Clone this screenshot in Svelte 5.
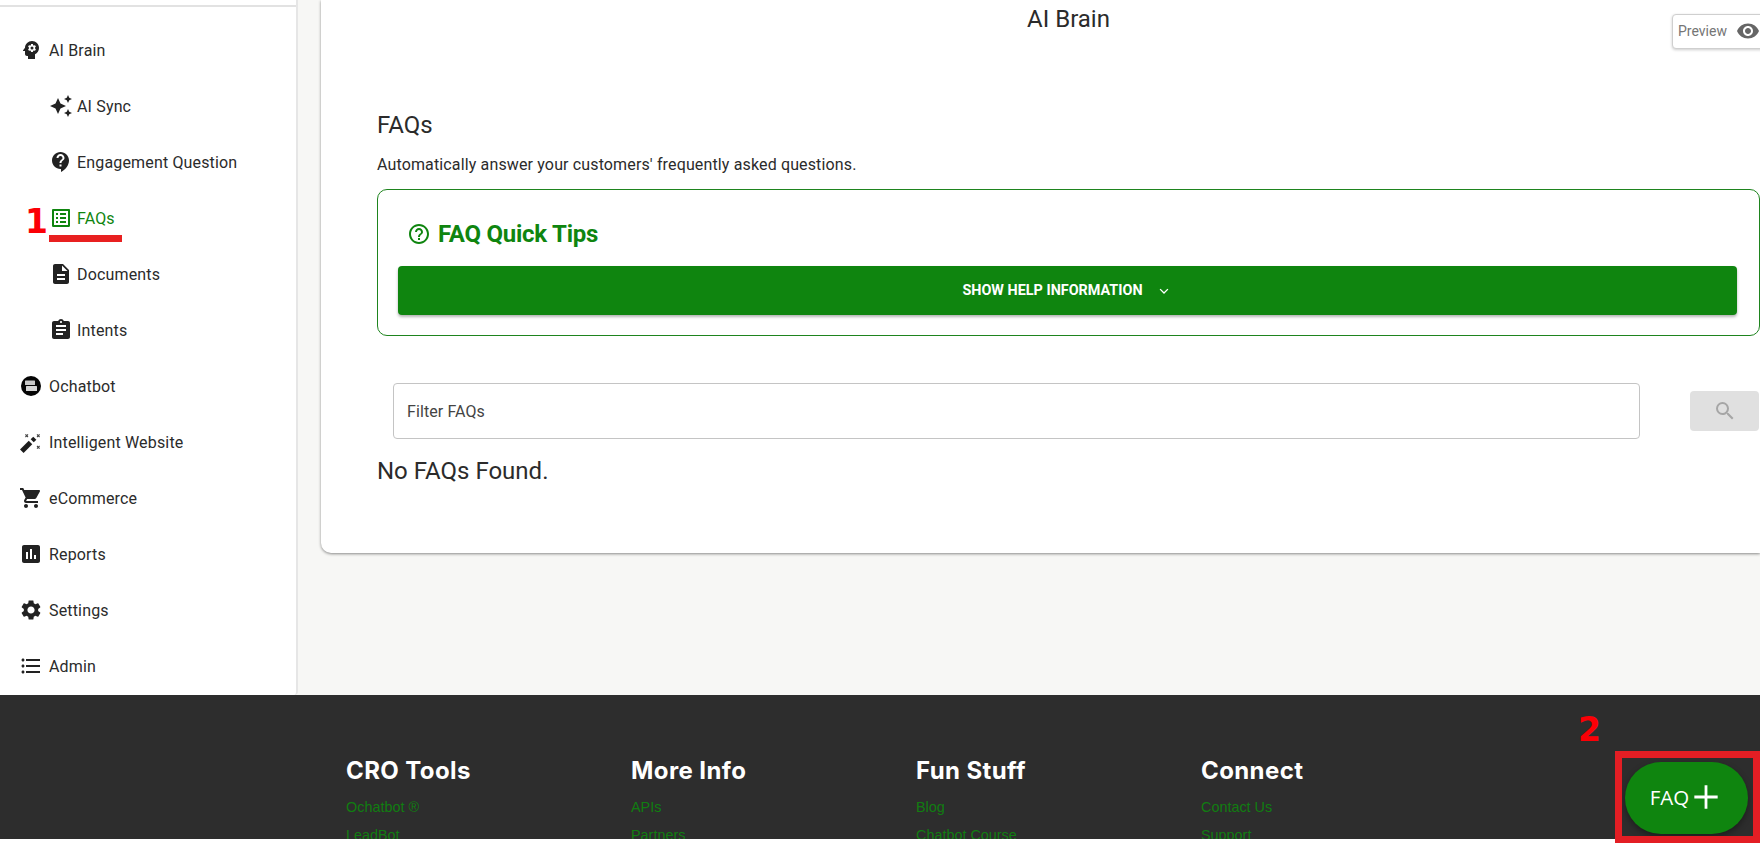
<script>
  const nav = [
    { label: 'AI Brain', icon: 'brain' },
    { label: 'AI Sync', icon: 'sparkle', sub: true },
    { label: 'Engagement Question', icon: 'question', sub: true },
    { label: 'FAQs', icon: 'list', sub: true, active: true },
    { label: 'Documents', icon: 'doc', sub: true },
    { label: 'Intents', icon: 'clipboard', sub: true },
    { label: 'Ochatbot', icon: 'bot' },
    { label: 'Intelligent Website', icon: 'wand' },
    { label: 'eCommerce', icon: 'cart' },
    { label: 'Reports', icon: 'chart' },
    { label: 'Settings', icon: 'gear' },
    { label: 'Admin', icon: 'bullets' }
  ];

  const paths = {
    brain: 'M13 3C9.23 3 6.19 5.95 6 9.66L4.08 12.19c-.24.31-.01.81.4.81H6v3c0 1.1.9 2 2 2h1v3h7v-4.68c2.36-1.12 4-3.53 4-6.32 0-3.87-3.13-7-7-7zm3 7c0 .13-.01.26-.02.39l.83.66c.08.06.1.16.05.25l-.8 1.39c-.05.09-.16.12-.24.09l-.99-.4c-.21.16-.43.29-.67.39L14 13.83c-.01.1-.1.17-.2.17h-1.6c-.1 0-.18-.07-.2-.17l-.15-1.06c-.25-.1-.47-.23-.68-.39l-.99.4c-.09.03-.2 0-.25-.09l-.8-1.39c-.05-.08-.03-.19.05-.25l.84-.66c-.01-.13-.02-.26-.02-.39 0-.13.02-.27.04-.39l-.85-.66c-.08-.06-.1-.16-.05-.26l.8-1.38c.05-.09.15-.12.24-.09l1 .4c.2-.15.43-.29.67-.39L12 6.17c.02-.1.1-.17.2-.17h1.6c.1 0 .18.07.2.17l.15 1.06c.24.1.46.23.67.39l1-.4c.09-.03.2 0 .24.09l.8 1.38c.05.09.03.2-.05.26l-.85.66c.03.12.04.25.04.39zM13 8.5a1.5 1.5 0 1 0 0 3 1.5 1.5 0 0 0 0-3z',
    sparkle: 'M19 9l1.25-2.75L23 5l-2.75-1.25L19 1l-1.25 2.75L15 5l2.75 1.25L19 9zm-7.5.5L9 4 6.5 9.5 1 12l5.5 2.5L9 20l2.5-5.5L17 12l-5.5-2.5zM19 15l-1.25 2.75L15 19l2.75 1.25L19 23l1.25-2.75L23 19l-2.75-1.25L19 15z',
    question: 'M11.5 2C6.81 2 3 5.81 3 10.5S6.81 19 11.5 19h.5v3c4.86-2.34 8-7 8-11.5C20 5.81 16.19 2 11.5 2zm1 14.5h-2v-2h2v2zm0-3.5h-2c0-3.25 3-3 3-5 0-1.1-.9-2-2-2s-2 .9-2 2h-2c0-2.21 1.79-4 4-4s4 1.79 4 4c0 2.5-3 2.75-3 5z',
    list: 'M19 5v14H5V5h14m1.1-2H3.9c-.5 0-.9.4-.9.9v16.2c0 .4.4.9.9.9h16.2c.4 0 .9-.5.9-.9V3.9c0-.5-.5-.9-.9-.9zM11 7h6v2h-6V7zm0 4h6v2h-6v-2zm0 4h6v2h-6zM7 7h2v2H7zm0 4h2v2H7zm0 4h2v2H7z',
    doc: 'M14 2H6c-1.1 0-1.99.9-1.99 2L4 20c0 1.1.89 2 1.99 2H18c1.1 0 2-.9 2-2V8l-6-6zm2 16H8v-2h8v2zm0-4H8v-2h8v2zm-3-5V3.5L18.5 9H13z',
    clipboard: 'M19 3h-4.18C14.4 1.84 13.3 1 12 1c-1.3 0-2.4.84-2.82 2H5c-1.1 0-2 .9-2 2v14c0 1.1.9 2 2 2h14c1.1 0 2-.9 2-2V5c0-1.1-.9-2-2-2zm-7 0c.55 0 1 .45 1 1s-.45 1-1 1-1-.45-1-1 .45-1 1-1zm2 14H7v-2h7v2zm3-4H7v-2h10v2zm0-4H7V7h10v2z',
    cart: 'M7 18c-1.1 0-1.99.9-1.99 2S5.9 22 7 22s2-.9 2-2-.9-2-2-2zM1 2v2h2l3.6 7.59-1.35 2.45c-.16.28-.25.61-.25.96 0 1.1.9 2 2 2h12v-2H7.42c-.14 0-.25-.11-.25-.25l.03-.12.9-1.63h7.45c.75 0 1.41-.41 1.75-1.03l3.58-6.49c.08-.14.12-.31.12-.48 0-.55-.45-1-1-1H5.21l-.94-2H1zm16 16c-1.1 0-1.99.9-1.99 2s.89 2 1.99 2 2-.9 2-2-.9-2-2-2z',
    chart: 'M19 3H5c-1.1 0-2 .9-2 2v14c0 1.1.9 2 2 2h14c1.1 0 2-.9 2-2V5c0-1.1-.9-2-2-2zM9 17H7v-7h2v7zm4 0h-2V7h2v10zm4 0h-2v-4h2v4z',
    gear: 'M19.14 12.94c.04-.3.06-.61.06-.94 0-.32-.02-.64-.07-.94l2.03-1.58c.18-.14.23-.41.12-.61l-1.92-3.32c-.12-.22-.37-.29-.59-.22l-2.39.96c-.5-.38-1.03-.7-1.62-.94l-.36-2.54c-.04-.24-.24-.41-.48-.41h-3.84c-.24 0-.43.17-.47.41l-.36 2.54c-.59.24-1.13.57-1.62.94l-2.39-.96c-.22-.08-.47 0-.59.22L2.74 8.87c-.12.21-.08.47.12.61l2.03 1.58c-.05.3-.09.63-.09.94s.02.64.07.94l-2.03 1.58c-.18.14-.23.41-.12.61l1.92 3.32c.12.22.37.29.59.22l2.39-.96c.5.38 1.03.7 1.62.94l.36 2.54c.05.24.24.41.48.41h3.84c.24 0 .44-.17.47-.41l.36-2.54c.59-.24 1.13-.56 1.62-.94l2.39.96c.22.08.47 0 .59-.22l1.92-3.32c.12-.22.07-.47-.12-.61l-2.01-1.58zM12 15.6c-1.98 0-3.6-1.62-3.6-3.6s1.62-3.6 3.6-3.6 3.6 1.62 3.6 3.6-1.62 3.6-3.6 3.6z',
    bullets: 'M4 10.5c-.83 0-1.5.67-1.5 1.5s.67 1.5 1.5 1.5 1.5-.67 1.5-1.5-.67-1.5-1.5-1.5zm0-6c-.83 0-1.5.67-1.5 1.5S3.17 7.5 4 7.5 5.5 6.83 5.5 6 4.83 4.5 4 4.5zm0 12c-.83 0-1.5.68-1.5 1.5s.68 1.5 1.5 1.5 1.5-.68 1.5-1.5-.67-1.5-1.5-1.5zM7 19h14v-2H7v2zm0-6h14v-2H7v2zm0-8v2h14V5H7z'
  };

  const footer = [
    { title: 'CRO Tools', links: ['Ochatbot ®', 'LeadBot'] },
    { title: 'More Info', links: ['APIs', 'Partners'] },
    { title: 'Fun Stuff', links: ['Blog', 'Chatbot Course'] },
    { title: 'Connect', links: ['Contact Us', 'Support'] }
  ];
</script>

<div class="page">
  <div class="top">
    <aside class="sidebar">
      <ul class="nav">
        {#each nav as item}
          <li class="item" class:sub={item.sub} class:active={item.active}>
            {#if item.icon === 'bot'}
              <svg class="ico" viewBox="0 0 24 24">
                <circle cx="12" cy="12" r="10" fill="#050505" />
                <rect x="6" y="6.500" width="10" height="4.500" rx="0.500" fill="#c9c9c9" />
                <rect x="7" y="12" width="11" height="5" rx="0.500" fill="#d6d6d6" />
              </svg>
            {:else if item.icon === 'wand'}
              <svg class="ico" viewBox="0 0 24 24">
                <path d="M2.800 21.200 11.500 12.500" stroke="#1c1c1c" stroke-width="5" fill="none" />
                <path d="M13.200 10.800 15.800 8.200" stroke="#1c1c1c" stroke-width="4.400" fill="none" />
                <path d="M6.400 4.400l2.600 2.600M9 4.400 6.400 7M18 4.400l2.600 2.600M20.600 4.400 18 7M18 16l2.600 2.600M20.600 16 18 18.600" stroke="#444" stroke-width="1.100" fill="none" />
              </svg>
            {:else}
              <svg class="ico" viewBox="0 0 24 24"><path d={paths[item.icon]} fill-rule="evenodd" /></svg>
            {/if}
            <span>{item.label}</span>
          </li>
        {/each}
      </ul>
    </aside>

    <main class="content">
      <div class="card">
        <h1 class="title">AI Brain</h1>
        <button class="preview">
          <span>Preview</span>
          <svg viewBox="0 0 24 24"><path d="M12 4.500C7 4.500 2.730 7.610 1 12c1.730 4.390 6 7.500 11 7.500s9.270-3.110 11-7.500c-1.730-4.390-6-7.500-11-7.500zM12 17c-2.760 0-5-2.240-5-5s2.240-5 5-5 5 2.240 5 5-2.240 5-5 5zm0-8c-1.660 0-3 1.340-3 3s1.340 3 3 3 3-1.340 3-3-1.340-3-3-3z" /></svg>
        </button>

        <h2 class="heading">FAQs</h2>
        <p class="lead">Automatically answer your customers' frequently asked questions.</p>

        <section class="tips">
          <h3 class="tips-title">
            <svg viewBox="0 0 24 24"><path d="M11 18h2v-2h-2v2zm1-16C6.480 2 2 6.480 2 12s4.480 10 10 10 10-4.480 10-10S17.520 2 12 2zm0 18c-4.410 0-8-3.590-8-8s3.590-8 8-8 8 3.590 8 8-3.590 8-8 8zm0-14c-2.210 0-4 1.790-4 4h2c0-1.100.9-2 2-2s2 .9 2 2c0 2-3 1.750-3 5h2c0-2.250 3-2.500 3-5 0-2.210-1.790-4-4-4z" /></svg>
            FAQ Quick Tips
          </h3>
          <button class="help">
            SHOW HELP INFORMATION
            <svg viewBox="0 0 24 24"><path d="M6.800 9.500 12 14.700l5.200-5.200" fill="none" stroke="#fff" stroke-width="1.800" /></svg>
          </button>
        </section>

        <div class="filter">
          <div class="field">Filter FAQs</div>
          <button class="search" aria-label="Search">
            <svg viewBox="0 0 24 24"><path d="M15.500 14h-.79l-.28-.27A6.470 6.470 0 0 0 16 9.500 6.500 6.500 0 1 0 9.500 16c1.610 0 3.090-.59 4.230-1.570l.27.28v.79l5 4.990L20.490 19l-4.990-5zm-6 0C7.010 14 5 11.990 5 9.500S7.010 5 9.500 5 14 7.010 14 9.500 11.990 14 9.500 14z" /></svg>
          </button>
        </div>

        <p class="empty">No FAQs Found.</p>
      </div>
    </main>
  </div>

  <footer class="footer">
    {#each footer as col}
      <div class="col">
        <h4>{col.title}</h4>
        {#each col.links as link}
          <a href="#top">{link}</a>
        {/each}
      </div>
    {/each}
  </footer>

  <button class="fab">FAQ <svg viewBox="0 0 24 24"><path d="M10.800 2h2.400v8.800H22v2.400h-8.800V22h-2.400v-8.800H2v-2.400h8.800z" /></svg></button>

  <!-- red annotations drawn on top of the screenshot -->
  <span class="mark one">1</span>
  <span class="underline"></span>
  <span class="mark two">2</span>
  <span class="frame"></span>
</div>

<style>
:global(body) {
  margin: 0;
  background: #fff;
}

.page {
  position: relative;
  width: 1760px;
  height: 843px;
  overflow: hidden;
  font-family: Roboto, sans-serif;
  color: #2b2b2b;
  background: #fff;
}

.top {
  display: flex;
  height: 695px;
  background: #f7f7f5;
}

.sidebar {
  width: 296px;
  flex: none;
  box-sizing: content-box;
  background: #fff;
  border-right: 2px solid #e6e6e6;
  border-bottom-right-radius: 4px;
}

.nav {
  list-style: none;
  margin: 5px 0 0;
  padding: 15px 0 0;
  border-top: 2px solid #e2e2e2;
}

.item {
  display: flex;
  align-items: center;
  gap: 6px;
  height: 56px;
  padding-left: 19px;
  font-size: 16px;
  letter-spacing: 0.16px;
  fill: #222;
}

.item.sub {
  gap: 4px;
  padding-left: 49px;
}

.item.active {
  color: #0f850f;
  fill: #0f850f;
}

.ico {
  width: 24px;
  height: 24px;
  flex: none;
}

.content {
  flex: 1;
  min-width: 0;
  padding-left: 23px;
}

.card {
  position: relative;
  height: 553px;
  box-sizing: border-box;
  padding: 0 0 0 56px;
  background: #fff;
  border-bottom-left-radius: 10px;
  box-shadow: 0 1px 3px rgba(0, 0, 0, 0.45);
}

.title {
  margin: 0;
  padding-top: 5px;
  text-align: center;
  font-size: 24px;
  font-weight: 400;
  line-height: 28px;
}

.preview {
  position: absolute;
  top: 14px;
  right: -6px;
  display: flex;
  align-items: center;
  gap: 9px;
  width: 94px;
  height: 35px;
  padding: 0 0 1px 5px;
  background: #fff;
  border: 1px solid #cfcfcf;
  border-radius: 4px;
  box-shadow: 0 1px 3px rgba(0, 0, 0, 0.2);
  font: 14px Roboto, sans-serif;
  color: #757575;
  fill: #666;
}

.preview svg {
  width: 24px;
  height: 24px;
}

.heading {
  margin: 76px 0 0;
  font-size: 24px;
  font-weight: 400;
  line-height: 32px;
}

.lead {
  margin: 14px 0 0;
  font-size: 16px;
  line-height: 20px;
  letter-spacing: 0.14px;
}

.tips {
  margin-top: 14px;
  height: 147px;
  box-sizing: border-box;
  padding: 30px 22px 0 20px;
  border: 1px solid #1e841e;
  border-radius: 10px;
}

.tips-title {
  display: flex;
  align-items: center;
  gap: 7px;
  margin: 0 0 18px 9px;
  font-size: 24px;
  font-weight: 700;
  letter-spacing: -0.24px;
  line-height: 28px;
  color: #0f850f;
  fill: #0f850f;
}

.tips-title svg {
  width: 24px;
  height: 24px;
}

.help {
  display: flex;
  align-items: center;
  justify-content: center;
  gap: 12px;
  width: 100%;
  height: 49px;
  border: 0;
  border-radius: 4px;
  background: #0f850f;
  color: #fff;
  font: 700 14.400px Roboto, sans-serif;
  box-shadow: 0 2px 3px rgba(0, 0, 0, 0.3);
}

.help svg {
  width: 18px;
  height: 18px;
}

.filter {
  display: flex;
  align-items: flex-start;
  margin: 47px 0 0 16px;
}

.field {
  width: 1247px;
  height: 56px;
  box-sizing: border-box;
  padding-left: 13px;
  display: flex;
  align-items: center;
  border: 1px solid #c4c4c4;
  border-radius: 4px;
  font-size: 16px;
  letter-spacing: 0.1px;
  color: #444;
}

.search {
  display: flex;
  align-items: center;
  justify-content: center;
  width: 69px;
  height: 40px;
  margin: 8px 0 0 50px;
  border: 0;
  padding: 0;
  border-radius: 4px;
  background: #e0e0e0;
  fill: #a6a6a6;
}

.search svg {
  width: 24px;
  height: 24px;
}

.empty {
  margin: 16px 0 0;
  font-size: 24px;
  line-height: 32px;
}

.footer {
  display: flex;
  height: 144px;
  overflow: hidden;
  box-sizing: border-box;
  padding: 62px 0 0 346px;
  background: #2d2d2d;
}

.col {
  width: 285px;
  flex: none;
}

.col h4 {
  margin: 0 0 14px;
  font-family: Inter, sans-serif;
  font-size: 24px;
  font-weight: 700;
  letter-spacing: 0.4px;
  line-height: 28px;
  color: #fff;
}

.col a {
  display: block;
  margin-bottom: 12px;
  font-family: "Liberation Sans", sans-serif;
  font-size: 14.400px;
  line-height: 16px;
  color: #117d11;
  text-decoration: none;
}

.fab {
  position: absolute;
  left: 1625px;
  top: 762px;
  display: flex;
  align-items: center;
  justify-content: center;
  gap: 3px;
  width: 123px;
  height: 72px;
  border: 0;
  border-radius: 36px;
  padding: 0 3px 3px 0;
  background: #0f850f;
  color: #fff;
  fill: #fff;
  font: 20.500px "Open Sans", sans-serif;
  box-shadow: 0 3px 6px rgba(0, 0, 0, 0.35);
}

.fab svg {
  width: 28px;
  height: 28px;
}

.mark {
  position: absolute;
  font-family: "DejaVu Sans", sans-serif;
  font-weight: 700;
  font-size: 33px;
  line-height: 33px;
  color: #fb0006;
}

.one {
  left: 25px;
  top: 205px;
}

.two {
  left: 1578px;
  top: 713px;
}

.underline {
  position: absolute;
  left: 49px;
  top: 235px;
  width: 73px;
  height: 7px;
  background: #e82020;
}

.frame {
  position: absolute;
  left: 1615px;
  top: 751px;
  width: 145px;
  height: 92px;
  box-sizing: border-box;
  border: 7px solid #e31e24;
}
</style>
